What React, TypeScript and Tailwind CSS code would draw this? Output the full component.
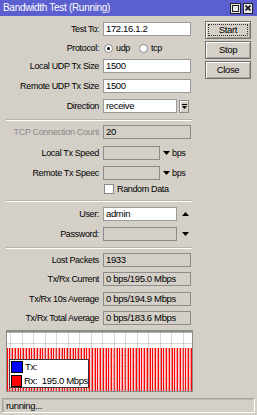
import React from "react";

const cols = Array.from({ length: 185 }, (_, i) => {
  const k = (i * 7) % 11;
  return k < 4 ? "#ff0000" : k < 7 ? "#ff9a9a" : "#ffd4d4";
});

function Down() {
  return (
    <svg width="7" height="4" viewBox="0 0 7 4" className="block">
      <path d="M0 0H7L3.5 4Z" fill="#000" />
    </svg>
  );
}
function Up() {
  return (
    <svg width="7" height="4" viewBox="0 0 7 4" className="block">
      <path d="M0 4H7L3.5 0Z" fill="#000" />
    </svg>
  );
}

function Label({ children, gray }: { children: React.ReactNode; gray?: boolean }) {
  return (
    <div
      className={
        "w-[100px] shrink-0 text-right whitespace-nowrap overflow-hidden pr-[1px] " +
        (gray ? "text-[#8a8a8a]" : "text-black")
      }
    >
      {children}
    </div>
  );
}

function Input({
  value,
  w,
  ro,
}: {
  value?: string;
  w: string;
  ro?: boolean;
}) {
  return (
    <div
      className={
        "h-[14px] ml-[3px] border flex items-center pl-[2px] text-[9.5px] whitespace-nowrap overflow-hidden " +
        w +
        " " +
        (ro ? "bg-[#d4d0c8] border-[#8c8c8c]" : "bg-white border-[#9a9a9a]")
      }
    >
      {value}
    </div>
  );
}

function Sep({ mt }: { mt: string }) {
  return <div className={"ml-[6px] w-[186px] h-[2px] border-t border-[#b8b4ac] border-b border-b-white " + mt} />;
}

function Btn({ children, focus }: { children: React.ReactNode; focus?: boolean }) {
  return (
    <div className="relative w-[46px] h-[18px] bg-[#d4d0c8] border border-[#6f6f6f] shadow-[inset_1px_1px_0_#ffffff,inset_-1px_-1px_0_#a8a49c] flex items-center justify-center text-[9.5px]">
      {focus && <div className="absolute inset-[2px] border border-dotted border-[#333]" />}
      {children}
    </div>
  );
}

function Chart() {
  const vgrid = Array.from({ length: 17 }, (_, n) => 3 + 11.5 * n);
  const hgrid = [1, 12, 24, 35, 47, 58];
  return (
    <div className="relative mt-[5px] ml-[6px] w-[187px] h-[62px] border border-[#8c8c8c] bg-white">
      <svg width="185" height="60" viewBox="0 0 185 60" className="block">
        <rect x="0" y="0" width="185" height="60" fill="#fff" />
        {cols.map((c, i) => (
          <rect key={i} x={i} y={17} width={1} height={43} fill={c} />
        ))}
        {vgrid.map((x, i) => (
          <rect key={"v" + i} x={Math.round(x)} y={0} width={1} height={60} fill="rgba(140,140,140,0.35)" />
        ))}
        {hgrid.map((y, i) => (
          <rect key={"h" + i} x={0} y={y} width={185} height={1} fill="rgba(140,140,140,0.35)" />
        ))}
        <rect x="0" y="0" width="185" height="1.5" fill="#8a8a8a" />
      </svg>
      <div className="absolute left-[2px] top-[28px] w-[80px] h-[29px] bg-white border border-[#3a3a3a] flex flex-col pl-[1px] pt-[1px] gap-[3px] text-[9.5px]">
        <div className="flex items-center h-[11px]">
          <div className="w-[12px] h-[12px] bg-[#0000ff] border border-black" />
          <span className="ml-[2px]">Tx:</span>
        </div>
        <div className="flex items-center h-[11px]">
          <div className="w-[12px] h-[12px] bg-[#ff0000] border border-black" />
          <span className="ml-[2px] whitespace-pre">Rx:  195.0 Mbps</span>
        </div>
      </div>
    </div>
  );
}

export default function App() {
  return (
    <div className="w-[257px] h-[415px] bg-[#d4d0c8] flex flex-col font-['Liberation_Sans',Arial,sans-serif] text-[9px] tracking-[-0.35px] text-black overflow-hidden leading-none">
      {/* title bar */}
      <div className="h-[16px] shrink-0 bg-[#5b5fd0] flex items-center justify-between pl-[3px] pr-[4px]">
        <span className="text-white text-[10px] tracking-[-0.3px]">Bandwidth Test (Running)</span>
        <div className="flex gap-[2px]">
          <div className="w-[11px] h-[11px] bg-[#e8e8e8] border border-[#222] flex items-center justify-center">
            <div className="w-[7px] h-[7px] border border-[#222]" />
          </div>
          <div className="w-[10px] h-[11px] bg-[#e8e8e8] border border-[#222] flex items-center justify-center">
            <svg width="6" height="6" viewBox="0 0 6 6">
              <path d="M0.5 0.5L5.5 5.5M5.5 0.5L0.5 5.5" stroke="#111" strokeWidth="1.6" />
            </svg>
          </div>
        </div>
      </div>

      <div className="flex">
        <div className="w-[205px] flex flex-col">
          <div className="flex items-center mt-[6px]">
            <Label>Test To:</Label>
            <Input value="172.16.1.2" w="w-[88px]" />
          </div>
          <div className="flex items-center mt-[4px] h-[16px]">
            <Label>Protocol:</Label>
            <div className="ml-[4px] flex items-center">
              <div className="w-[9px] h-[9px] rounded-full bg-white border border-[#8a8a8a] flex items-center justify-center">
                <div className="w-[3px] h-[3px] rounded-full bg-black" />
              </div>
              <span className="ml-[3px]">udp</span>
              <div className="ml-[9px] w-[9px] h-[9px] rounded-full bg-white border border-[#8a8a8a]" />
              <span className="ml-[3px]">tcp</span>
            </div>
          </div>
          <div className="flex items-center mt-[3px]">
            <Label>Local UDP Tx Size</Label>
            <Input value="1500" w="w-[88px]" />
          </div>
          <div className="flex items-center mt-[6px]">
            <Label>Remote UDP Tx Size</Label>
            <Input value="1500" w="w-[88px]" />
          </div>
          <div className="flex items-center mt-[6px]">
            <Label>Direction</Label>
            <Input value="receive" w="w-[74px]" />
            <div className="ml-[2px] w-[10px] h-[13px] bg-[#d4d0c8] border border-[#8c8c8c] shadow-[inset_1px_1px_0_#fff] flex flex-col items-center justify-center gap-[1px]">
              <div className="w-[5px] h-[1px] bg-black" />
              <svg width="5" height="3" viewBox="0 0 5 3" className="block">
                <path d="M0 0H5L2.5 3Z" fill="#000" />
              </svg>
            </div>
          </div>
          <Sep mt="mt-[6px]" />
          <div className="flex items-center mt-[4px]">
            <Label gray>TCP Connection Count</Label>
            <Input value="20" w="w-[88px]" ro />
          </div>
          <div className="flex items-center mt-[7px]">
            <Label>Local Tx Speed</Label>
            <Input w="w-[57px]" ro />
            <div className="ml-[3px]"><Down /></div>
            <span className="ml-[2px]">bps</span>
          </div>
          <div className="flex items-center mt-[6px]">
            <Label>Remote Tx Speec</Label>
            <Input w="w-[57px]" ro />
            <div className="ml-[3px]"><Down /></div>
            <span className="ml-[2px]">bps</span>
          </div>
          <div className="flex items-center mt-[4px] h-[10px]">
            <div className="w-[104px] shrink-0" />
            <div className="w-[10px] h-[10px] bg-white border border-[#8a8a8a]" />
            <span className="ml-[3px]">Random Data</span>
          </div>
          <Sep mt="mt-[6px]" />
          <div className="flex items-center mt-[5px]">
            <Label>User:</Label>
            <Input value="admin" w="w-[74px]" />
            <div className="ml-[5px]"><Up /></div>
          </div>
          <div className="flex items-center mt-[6px]">
            <Label>Password:</Label>
            <Input w="w-[74px]" ro />
            <div className="ml-[5px]"><Down /></div>
          </div>
          <Sep mt="mt-[6px]" />
          <div className="flex items-center mt-[4px]">
            <Label>Lost Packets</Label>
            <Input value="1933" w="w-[88px]" ro />
          </div>
          <div className="flex items-center mt-[5px]">
            <Label>Tx/Rx Current</Label>
            <Input value="0 bps/195.0 Mbps" w="w-[88px]" ro />
          </div>
          <div className="flex items-center mt-[6px]">
            <Label>Tx/Rx 10s Average</Label>
            <Input value="0 bps/194.9 Mbps" w="w-[88px]" ro />
          </div>
          <div className="flex items-center mt-[5px]">
            <Label>Tx/Rx Total Average</Label>
            <Input value="0 bps/183.6 Mbps" w="w-[88px]" ro />
          </div>
          <Chart />
        </div>
        <div className="flex flex-col pt-[5px] gap-[2px]">
          <Btn focus>Start</Btn>
          <Btn>Stop</Btn>
          <Btn>Close</Btn>
        </div>
      </div>

      <div className="mt-auto mb-[2px] mx-[2px] h-[15px] border border-[#a8a49c] border-b-white border-r-white shadow-[inset_1px_1px_0_#c0bcb4] flex items-center pl-[3px] text-[9.5px]">
        running...
      </div>
    </div>
  );
}
